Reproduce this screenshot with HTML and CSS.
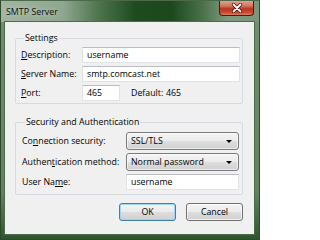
FILE: index.html
```html
<!DOCTYPE html>
<html>
<head>
<meta charset="utf-8">
<link rel="stylesheet" href="styles.css">
</head>
<body>
<div class="window">
  <div class="titlebar">
    <span class="title">SMTP Server</span>
    <span class="close">
      <svg width="12" height="10" viewBox="0 0 12 10">
        <path d="M2.5 1.5 L9.5 8.5 M9.5 1.5 L2.5 8.5" stroke="#3a1008" stroke-width="3.2" stroke-linecap="round"/>
        <path d="M2.5 1.5 L9.5 8.5 M9.5 1.5 L2.5 8.5" stroke="#ffffff" stroke-width="1.8" stroke-linecap="round"/>
      </svg>
    </span>
  </div>
  <div class="client">
    <fieldset class="group settings">
      <legend>Settings</legend>
      <div class="grid g1">
        <span class="lbl"><u>D</u>escription:</span>
        <span class="input">username</span>
        <span class="lbl"><u>S</u>erver Name:</span>
        <span class="input">smtp.comcast.net</span>
        <span class="lbl"><u>P</u>ort:</span>
        <span class="portrow">
          <span class="input">465</span>
          <span class="deflbl">Default:</span>
          <span class="defval">465</span>
        </span>
      </div>
    </fieldset>
    <fieldset class="group security">
      <legend>Security and Authentication</legend>
      <div class="grid g2">
        <span class="lbl">Co<u>n</u>nection security:</span>
        <span class="combo"><span>SSL/TLS</span><i class="arrow"></i></span>
        <span class="lbl">Authen<u>t</u>ication method:</span>
        <span class="combo"><span>Normal password</span><i class="arrow"></i></span>
        <span class="lbl">User Na<u>m</u>e:</span>
        <span class="input">username</span>
      </div>
    </fieldset>
    <div class="buttons">
      <span class="btn default">OK</span>
      <span class="btn">Cancel</span>
    </div>
  </div>
</div>
</body>
</html>
```
FILE: styles.css
```css
html, body {
  margin: 0;
  padding: 0;
  background: #ffffff;
}
body {
  font-family: "Open Sans", "Liberation Sans", sans-serif;
  font-size: 8.8px;
  color: #000;
}
.window {
  width: 260px;
  height: 240px;
  box-sizing: border-box;
  padding: 0 4px 4px 3px;
  border: 1px solid #2e4a2e;
  border-top-color: #4a6a4a;
  background:
    linear-gradient(to right, #a3b4a3 0%, #8fa68f 24%, #4d744d 38%, #1f4b20 52%, #1d481d 66%, #4a714a 78%, #7f9a7f 88%, #7a957a 100%) top / 100% 21px no-repeat,
    linear-gradient(to bottom, #728f72 0%, #62835f 80%, #2f552f 100%);
  display: flex;
  flex-direction: column;
}
.titlebar {
  height: 20px;
  display: flex;
  justify-content: space-between;
  align-items: flex-start;
  margin-right: -3px;
}
.title {
  margin-left: 2px;
  line-height: 22px;
  font-size: 8.9px;
  color: #0a0f0a;
  text-shadow: 0 0 4px rgba(230,240,230,0.8);
}
.close {
  width: 35px;
  height: 15px;
  margin-right: 4px;
  box-sizing: border-box;
  border: 1px solid #4a1a12;
  border-top: none;
  border-radius: 0 0 4px 4px;
  background: linear-gradient(to bottom, #e4a090 0%, #d27560 35%, #b8371f 55%, #c7482e 80%, #e07a5c 100%);
  display: flex;
  align-items: center;
  justify-content: center;
}
.close svg { display: block; }
.client {
  flex: 1;
  background: #f0f0f0;
  border: 1px solid #4b6b4b;
  padding: 0 11px 0 10px;
  display: flex;
  flex-direction: column;
}
.group {
  margin: 0;
  border: 1px solid #d5dbe0;
  border-radius: 2px;
  min-width: 0;
}
.group legend {
  padding: 0 1px;
  margin-left: 3px;
  line-height: 12px;
  height: 12px;
}
.settings {
  margin-top: 10px;
  padding: 3px 2px 2px 5px;
}
.security {
  margin-top: 12px;
  padding: 4px 3px 4px 6px;
}
.grid {
  display: grid;
  align-items: center;
}
.g1 {
  grid-template-columns: 61px 158px;
  row-gap: 3px;
}
.g2 {
  grid-template-columns: 104px 113px;
  row-gap: 3px;
}
.lbl {
  line-height: 14px;
  white-space: nowrap;
}
.input {
  height: 16px;
  box-sizing: border-box;
  background: #fff;
  border: 1px solid #e0e4e9;
  border-top-color: #b9bcc2;
  padding-left: 4px;
  line-height: 14px;
  white-space: nowrap;
  overflow: hidden;
}
.portrow {
  display: grid;
  grid-template-columns: 38px 11px 35px auto;
  align-items: center;
}
.deflbl {
  grid-column: 3;
  white-space: nowrap;
}
.defval {
  grid-column: 4;
}
.combo {
  height: 18px;
  box-sizing: border-box;
  border: 1px solid #7a7a7a;
  border-radius: 3px;
  background: linear-gradient(to bottom, #f4f4f4 0%, #ececec 48%, #dedede 52%, #d0d0d0 100%);
  box-shadow: inset 0 0 0 1px rgba(255,255,255,0.6);
  display: flex;
  align-items: center;
  justify-content: space-between;
  padding: 0 6px 0 4px;
  line-height: 14px;
}
.arrow {
  width: 0;
  height: 0;
  border-left: 3px solid transparent;
  border-right: 3px solid transparent;
  border-top: 3px solid #000;
}
.buttons {
  margin-top: 8px;
  display: flex;
  justify-content: flex-end;
  gap: 10px;
}
.btn {
  width: 57px;
  height: 18px;
  box-sizing: border-box;
  border: 1px solid #707070;
  border-radius: 3px;
  background: linear-gradient(to bottom, #f4f4f4 0%, #ebebeb 48%, #dddddd 52%, #cfcfcf 100%);
  box-shadow: inset 0 0 0 1px rgba(255,255,255,0.7);
  display: flex;
  align-items: center;
  justify-content: center;
}
.btn.default {
  border-color: #3c7fb1;
  box-shadow: inset 0 0 0 1px #9ed6f5;
}
```
